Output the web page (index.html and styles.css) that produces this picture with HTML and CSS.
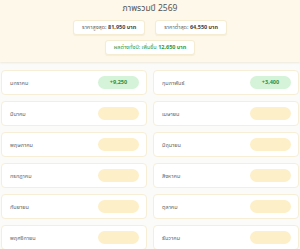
FILE: index.html
```html
<!DOCTYPE html>
<html lang="th">
<head>
<meta charset="utf-8">
<link rel="stylesheet" href="styles.css">
</head>
<body>
<header class="summary">
  <h1 class="title">ภาพรวมปี 2569</h1>
  <div class="stat-row">
    <div class="stat">ราคาสูงสุด: <b>81,950 บาท</b></div>
    <div class="stat">ราคาต่ำสุด: <b>64,550 บาท</b></div>
  </div>
  <div class="stat-row">
    <div class="stat stat-diff">ผลต่างทั้งปี: เพิ่มขึ้น <b>12,650 บาท</b></div>
  </div>
</header>
<main class="months">
  <div class="card"><span class="label">มกราคม</span><span class="pill pill-up">+9,250</span></div>
  <div class="card"><span class="label">กุมภาพันธ์</span><span class="pill pill-up">+3,400</span></div>
  <div class="card"><span class="label">มีนาคม</span><span class="pill"></span></div>
  <div class="card"><span class="label">เมษายน</span><span class="pill"></span></div>
  <div class="card"><span class="label">พฤษภาคม</span><span class="pill"></span></div>
  <div class="card"><span class="label">มิถุนายน</span><span class="pill"></span></div>
  <div class="card"><span class="label">กรกฎาคม</span><span class="pill"></span></div>
  <div class="card"><span class="label">สิงหาคม</span><span class="pill"></span></div>
  <div class="card"><span class="label">กันยายน</span><span class="pill"></span></div>
  <div class="card"><span class="label">ตุลาคม</span><span class="pill"></span></div>
  <div class="card"><span class="label">พฤศจิกายน</span><span class="pill"></span></div>
  <div class="card"><span class="label">ธันวาคม</span><span class="pill"></span></div>
</main>
</body>
</html>
```

FILE: styles.css
```css
html, body {
  margin: 0;
  padding: 0;
}
body {
  background: #fbfbfa;
  font-family: "Noto Sans", "Noto Sans Thai", sans-serif;
  color: #555;
  overflow: hidden;
}
.summary {
  background: #fdf8ea;
  padding: 2px 0 7px;
  text-align: center;
  box-shadow: 0 1px 2px rgba(200, 180, 120, 0.25);
}
.title {
  margin: 0 0 6px;
  font-size: 8.5px;
  line-height: 12px;
  font-weight: 400;
  color: #555;
}
.stat-row {
  display: flex;
  justify-content: center;
  gap: 10px;
}
.stat-row + .stat-row {
  margin-top: 5px;
}
.stat {
  height: 13px;
  line-height: 13px;
  padding: 0 8px;
  font-size: 5.5px;
  color: #666;
  background: #fff;
  border: 1px solid #f5ecd2;
  border-radius: 3px;
  box-shadow: 0 1px 1px rgba(200, 180, 120, 0.15);
}
.stat b {
  color: #444;
}
.stat-diff,
.stat-diff b {
  color: #2e9a41;
}
.months {
  display: grid;
  grid-template-columns: 1fr 1fr;
  gap: 6px;
  padding: 8px 1px;
}
.card {
  box-sizing: border-box;
  height: 25px;
  display: flex;
  align-items: center;
  justify-content: space-between;
  padding: 0 7px 0 8px;
  background: #fff;
  border: 1px solid #f6eed6;
  border-radius: 4px;
}
.label {
  font-size: 5.5px;
  color: #666;
}
.pill {
  width: 41px;
  height: 13px;
  line-height: 13px;
  border-radius: 7px;
  background: #fdf0c8;
  text-align: center;
  font-size: 5.5px;
  font-weight: 700;
}
.pill-up {
  background: #d5f3d9;
  color: #2e8f3f;
}
```
